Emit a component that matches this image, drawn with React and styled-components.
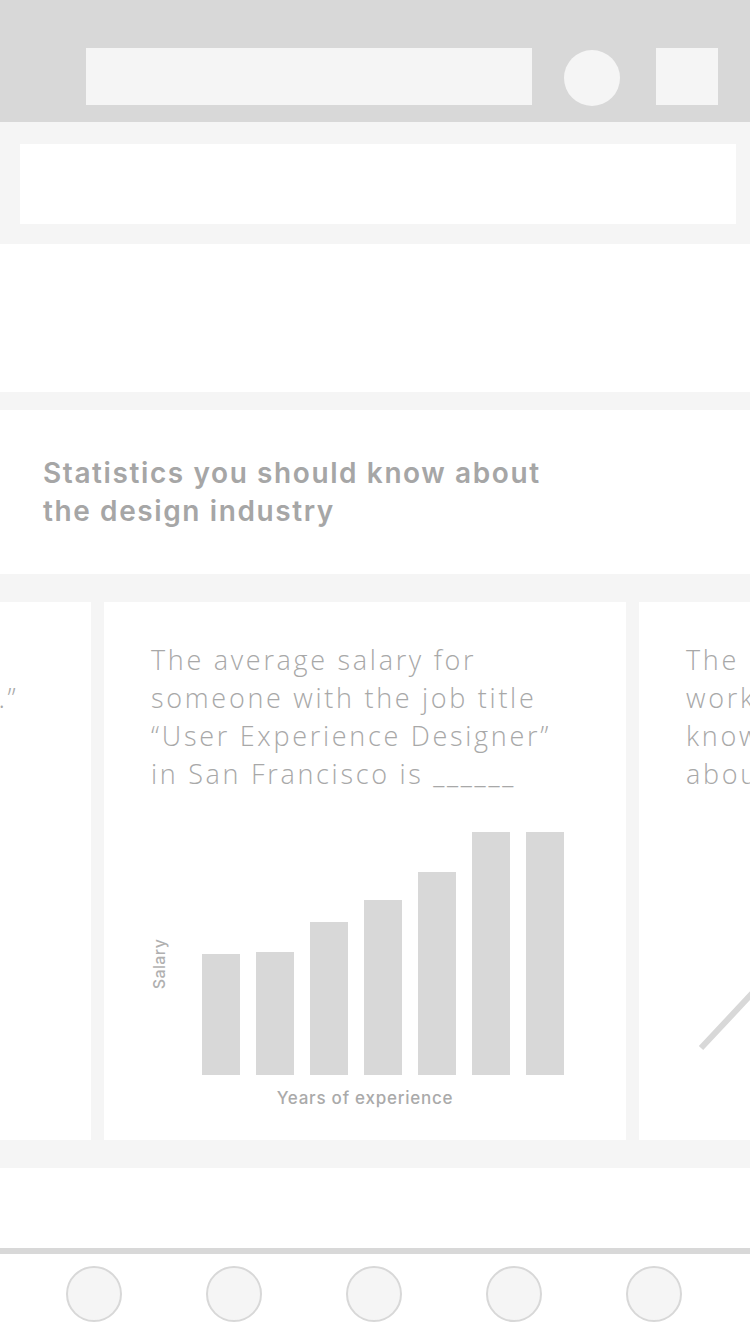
import React from 'react'
import styled, { createGlobalStyle } from 'styled-components'

const GlobalStyle = createGlobalStyle`
  html, body {
    margin: 0;
    padding: 0;
    background: #ffffff;
  }
  * {
    box-sizing: border-box;
  }
`

const bars = [121, 123, 153, 175, 203, 243, 243]

const App = () => {
  return (
    <Page>
      <GlobalStyle />
      <Header>
        <SearchBox />
        <RoundButton />
        <SquareButton />
      </Header>
      <Banner>
        <BannerBox />
      </Banner>
      <BlankBlock height={148} />
      <Divider height={18} />
      <Intro>
        <h2>Statistics you should know about<br />the design industry</h2>
      </Intro>
      <Carousel>
        <Track>
          <Card>
            <CardText>
              Most designers describe<br />
              their job is “solving issues.”
            </CardText>
          </Card>
          <Card>
            <CardText>
              The average salary for<br />
              someone with the job title<br />
              “User Experience Designer”<br />
              in San Francisco is ______
            </CardText>
            <Chart>
              <YLabel><span>Salary</span></YLabel>
              <Bars>
                {bars.map((h, i) => (
                  <Bar key={i} style={{ height: h }} />
                ))}
              </Bars>
              <XLabel>Years of experience</XLabel>
            </Chart>
          </Card>
          <Card>
            <CardText>
              The percentage of designers<br />
              working remotely who<br />
              know how to code is<br />
              about ______
            </CardText>
            <LineChart viewBox='0 0 428 280' width='428' height='280'>
              <polyline
                points='15,216 90,136 160,106 240,56 330,16'
                fill='none'
                stroke='#d8d8d8'
                strokeWidth='6'
              />
            </LineChart>
          </Card>
        </Track>
      </Carousel>
      <BlankBlock height={80} />
      <TabBar>
        {[0, 1, 2, 3, 4].map(i => (
          <TabIcon key={i} />
        ))}
      </TabBar>
    </Page>
  )
}

const Page = styled.div`
  width: 750px;
  min-height: 1334px;
  background: #ffffff;
  font-family: 'Inter', 'Liberation Sans', sans-serif;
  overflow: hidden;
`

const Header = styled.header`
  height: 122px;
  background: #d8d8d8;
  display: flex;
  align-items: flex-start;
  padding: 48px 32px 0 86px;
`

const SearchBox = styled.div`
  width: 446px;
  height: 57px;
  background: #f5f5f5;
`

const RoundButton = styled.div`
  width: 56px;
  height: 56px;
  margin: 2px 0 0 32px;
  border-radius: 50%;
  background: #f5f5f5;
`

const SquareButton = styled.div`
  width: 62px;
  height: 57px;
  margin-left: 36px;
  background: #f5f5f5;
`

const Banner = styled.section`
  height: 122px;
  background: #f5f5f5;
  padding: 22px 14px 0 20px;
`

const BannerBox = styled.div`
  height: 80px;
  background: #ffffff;
`

const BlankBlock = styled.div`
  height: ${p => p.height}px;
  background: #ffffff;
`

const Divider = styled.div`
  height: ${p => p.height}px;
  background: #f5f5f5;
`

const Intro = styled.section`
  height: 164px;
  padding: 44px 43px 0;

  h2 {
    margin: 0;
    font-family: 'Inter', 'Liberation Sans', sans-serif;
    font-size: 28px;
    font-weight: 600;
    line-height: 38px;
    color: #a6a6a6;
    letter-spacing: 1.6px;
  }
`

const Carousel = styled.section`
  height: 594px;
  background: #f5f5f5;
  padding-top: 28px;
  overflow: hidden;
`

const Track = styled.div`
  display: flex;
  gap: 13px;
  transform: translateX(-431px);
`

const Card = styled.article`
  flex: 0 0 522px;
  min-width: 0;
  height: 538px;
  background: #ffffff;
  padding: 39px 47px 0;
  display: flex;
  flex-direction: column;
  overflow: hidden;
`

const CardText = styled.p`
  margin: 0;
  font-family: 'Open Sans', 'Liberation Sans', sans-serif;
  font-weight: 300;
  font-size: 27px;
  line-height: 38px;
  letter-spacing: 2.7px;
  color: #a8a8a8;
  white-space: nowrap;
`

const Chart = styled.div`
  margin-top: 39px;
  display: grid;
  grid-template-columns: 51px 362px;
  grid-template-rows: 243px auto;
`

const YLabel = styled.div`
  display: flex;
  align-items: center;
  justify-content: flex-start;
  padding-top: 20px;

  span {
    display: block;
    transform: rotate(-90deg) translateY(-10px);
    transform-origin: center;
    font-size: 16px;
    font-weight: 500;
    color: #b0b0b0;
    letter-spacing: 0.4px;
    margin-left: -7px;
  }
`

const Bars = styled.div`
  display: flex;
  align-items: flex-end;
  gap: 16px;
`

const Bar = styled.div`
  width: 38px;
  background: #d8d8d8;
`

const XLabel = styled.div`
  grid-column: 1 / 3;
  text-align: center;
  margin-top: 13px;
  padding-left: 15px;
  font-size: 17px;
  font-weight: 500;
  color: #aaaaaa;
  letter-spacing: 0.75px;
`

const LineChart = styled.svg`
  margin-top: 39px;
  display: block;
`

const TabBar = styled.nav`
  height: 86px;
  border-top: 6px solid #d8d8d8;
  background: #ffffff;
  display: flex;
  align-items: center;
  justify-content: flex-start;
  gap: 84px;
  padding-left: 66px;
`

const TabIcon = styled.div`
  width: 56px;
  height: 56px;
  border-radius: 50%;
  background: #f5f5f5;
  border: 2px solid #d8d8d8;
`

export default App
